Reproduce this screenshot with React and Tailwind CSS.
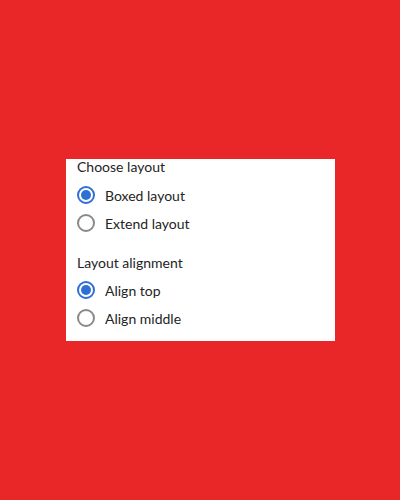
export default function App() {
  const Radio = ({ checked, label }) => (
    <div className="flex items-center h-[28px]">
      <div className="w-[28px] flex items-center">
        <div
          className={
            "w-[18px] h-[18px] rounded-full border-2 flex items-center justify-center " +
            (checked ? "border-[#2f6fd6]" : "border-[#8a8a8a]")
          }
        >
          {checked && <div className="w-[10px] h-[10px] rounded-full bg-[#2f6fd6]" />}
        </div>
      </div>
      <span className="text-[14px] text-[#242424]">{label}</span>
    </div>
  );
  return (
    <div className="w-[400px] h-[500px] bg-[#e92728] flex" style={{ fontFamily: '"Segoe UI", Lato, sans-serif' }}>
      <div className="mt-[159px] ml-[66px] w-[269px] h-[182px] bg-white pl-[11px] flex flex-col">
        <div className="text-[14px] text-[#242424] leading-[18px] mt-[-1px] h-[23px]">Choose layout</div>
        <Radio checked label="Boxed layout" />
        <Radio label="Extend layout" />
        <div className="text-[14px] text-[#242424] leading-[18px] mt-[17px] h-[22px]">Layout alignment</div>
        <Radio checked label="Align top" />
        <Radio label="Align middle" />
      </div>
    </div>
  );
}
